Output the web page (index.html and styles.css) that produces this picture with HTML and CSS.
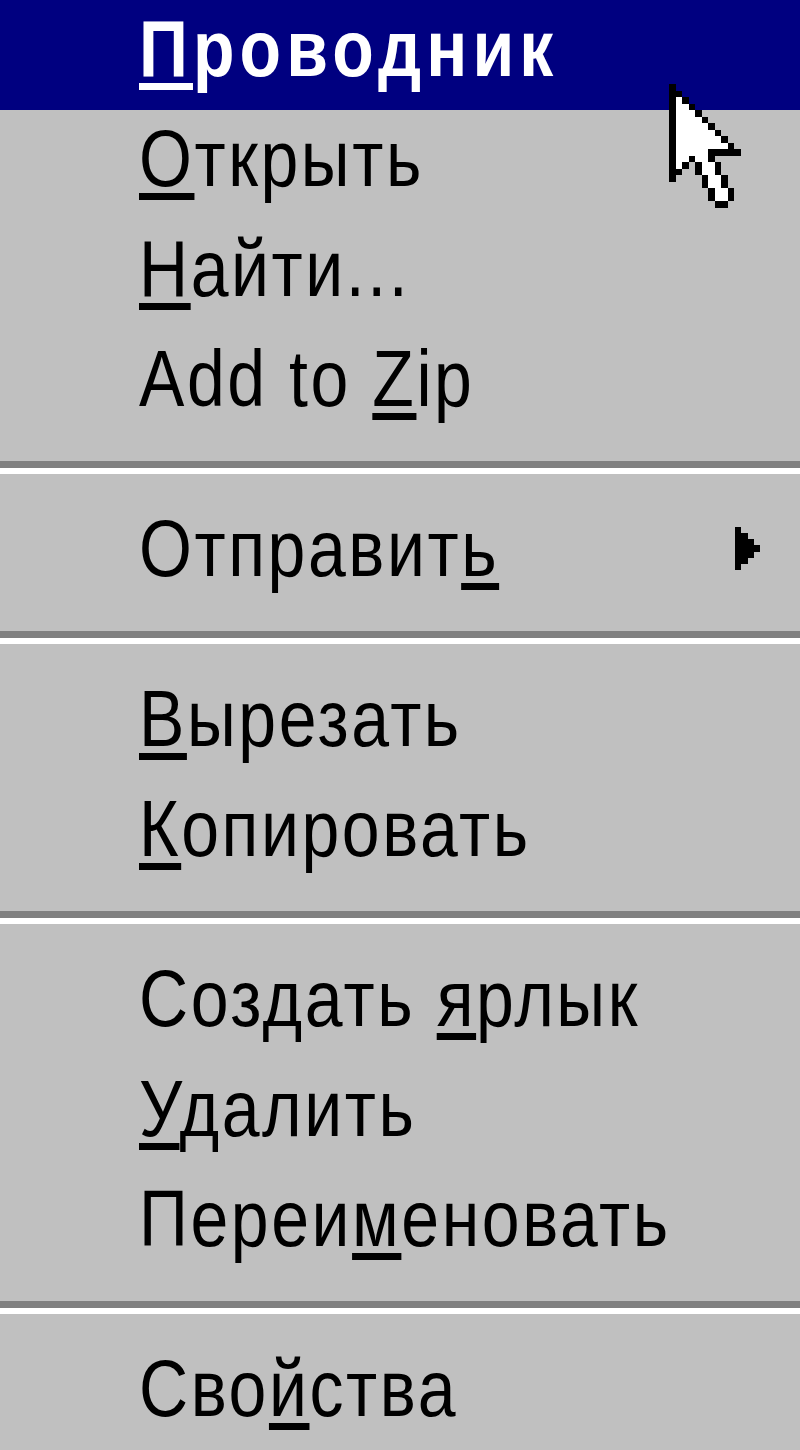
FILE: index.html
```html
<!DOCTYPE html>
<html lang="ru">
<head>
    <meta charset="UTF-8">
    <meta name="viewport" content="width=device-width, initial-scale=1.0">
    <title>Контекстное меню</title>
    <link rel="stylesheet" href="styles.css">
</head>
<body>
    <div class="menu">
        <div class="item active"><span class="label"><u>П</u>роводник</span></div>
        <div class="item"><span class="label"><u>О</u>ткрыть</span></div>
        <div class="item"><span class="label"><u>Н</u>айти...</span></div>
        <div class="item"><span class="label">Add to <u>Z</u>ip</span></div>
        <div class="sep"></div>
        <div class="item">
            <span class="label">Отправит<u>ь</u></span>
            <!-- submenu arrow, 4x7 pixels -->
            <svg class="arrow" viewBox="0 0 4 7" width="25" height="45" shape-rendering="crispEdges">
                <path d="M0 0h1v7h-1z M1 1h1v5h-1z M2 2h1v3h-1z M3 3h1v1h-1z" fill="#000"/>
            </svg>
        </div>
        <div class="sep"></div>
        <div class="item"><span class="label"><u>В</u>ырезать</span></div>
        <div class="item"><span class="label"><u>К</u>опировать</span></div>
        <div class="sep"></div>
        <div class="item"><span class="label">Создать <u>я</u>рлык</span></div>
        <div class="item"><span class="label"><u>У</u>далить</span></div>
        <div class="item"><span class="label">Переи<u>м</u>еновать</span></div>
        <div class="sep"></div>
        <div class="item"><span class="label">Сво<u>й</u>ства</span></div>
    </div>

    <!-- mouse pointer, 11x19 pixels -->
    <svg class="cursor" viewBox="0 0 11 19" width="71.5" height="123.5" shape-rendering="crispEdges">
        <path fill="#fff" d="M1 2h1v1h-1z M1 3h2v1h-2z M1 4h3v1h-3z M1 5h4v1h-4z M1 6h5v1h-5z M1 7h6v1h-6z M1 8h7v1h-7z M1 9h8v1h-8z M1 10h5v1h-5z M1 11h2v1h-2z M4 11h2v1h-2z M1 12h1v1h-1z M5 12h2v2h-2z M6 14h2v2h-2z M7 16h2v2h-2z"/>
        <path fill="#000" d="M0 0h1v15h-1z M1 1h1v1h-1z M2 2h1v1h-1z M3 3h1v1h-1z M4 4h1v1h-1z M5 5h1v1h-1z M6 6h1v1h-1z M7 7h1v1h-1z M8 8h1v1h-1z M9 9h1v1h-1z M6 10h5v1h-5z M3 11h1v1h-1z M6 11h1v1h-1z M2 12h1v1h-1z M4 12h1v2h-1z M7 12h1v2h-1z M1 13h1v1h-1z M5 14h1v2h-1z M8 14h1v2h-1z M6 16h1v2h-1z M9 16h1v2h-1z M7 18h2v1h-2z"/>
    </svg>
</body>
</html>
```

FILE: styles.css
```css
body {
    margin: 0;
    padding: 0;
    background-color: #c0c0c0;
    font-family: "Liberation Sans", Arial, sans-serif;
    overflow: hidden;
}
.menu {
    width: 800px;
    height: 1450px;
    background-color: #c0c0c0;
}
.item {
    display: flex;
    justify-content: space-between;
    align-items: flex-start;
    height: 110px;
    box-sizing: border-box;
    padding: 0 40px 12px 139px;
    font-size: 80px;
    line-height: 98px;
    letter-spacing: 3px;
    color: #000;
}
.item.active {
    background-color: #000080;
    color: #fff;
    font-weight: bold;
    letter-spacing: 6px;
}
/* the old bitmap font is narrow, so squeeze the glyphs a little */
.label {
    white-space: nowrap;
    display: inline-block;
    transform: scaleX(0.85);
    transform-origin: left center;
}
.label u {
    text-decoration: underline;
    text-decoration-thickness: 7px;
    text-underline-offset: 7px;
    text-decoration-skip-ink: none;
}
.arrow {
    margin-top: 26px;
}
.sep {
    padding: 21px 0 26px;
}
.sep::before {
    content: "";
    display: block;
    border-top: 7px solid #808080;
    border-bottom: 6px solid #fff;
}
.cursor {
    position: absolute;
    left: 669px;
    top: 84px;
}
```
